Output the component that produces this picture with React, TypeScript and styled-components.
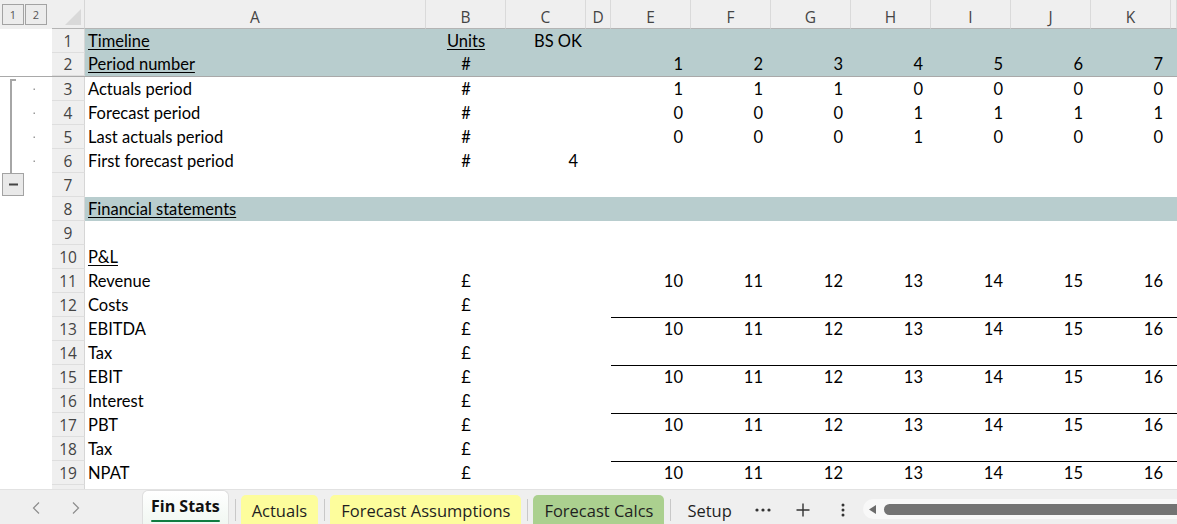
import React from "react";
import styled, { createGlobalStyle, css } from "styled-components";

const GlobalStyle = createGlobalStyle`
  html, body { margin: 0; padding: 0; background: #ffffff; }
  body { overflow: hidden; }
  * { box-sizing: border-box; }
`;

const CELL_FONT = `Lato, "Liberation Sans", sans-serif`;
const UI_FONT = `"Open Sans", "Noto Sans", sans-serif`;
const COLS = "341px 80px 80px 25px repeat(7, 80px) 1fr";
const BAND = "#b8cdce";

const Frame = styled.div`
  width: 1177px;
  height: 524px;
  display: flex;
  flex-direction: column;
  overflow: hidden;
  background: #ffffff;
`;

const Sheet = styled.div`
  height: 489px;
  flex: none;
  overflow: hidden;
  display: flex;
  flex-direction: column;
`;

const HeaderRow = styled.div`
  display: grid;
  grid-template-columns: 52px 33px ${COLS};
  height: 29px;
  flex: none;
  background: #efefef;
`;

const LevelBox = styled.div`
  display: flex;
  gap: 1px;
  padding: 4px 0 0 2px;
`;

const LevelButton = styled.div`
  width: 22px;
  height: 21px;
  border: 1px solid #a3a3a3;
  background: #ececec;
  color: #555555;
  font: 11px ${UI_FONT};
  display: flex;
  align-items: center;
  justify-content: center;
`;

const Corner = styled.div`
  border-bottom: 1px solid #b4b4b4;
  border-right: 1px solid #d6d6d6;
  display: flex;
  align-items: flex-end;
  justify-content: flex-end;
  padding: 0 3px 3px 0;
`;

const ColHeader = styled.div`
  border-bottom: 1px solid #b4b4b4;
  border-right: 1px solid #dadada;
  color: #444444;
  font: 15.5px ${UI_FONT};
  display: flex;
  align-items: center;
  justify-content: center;
  padding-top: 6px;
  overflow: hidden;
`;

const SheetRow = styled.div<{ $frozen?: boolean }>`
  display: grid;
  grid-template-columns: 52px 33px 1fr;
  height: 24px;
  flex: none;
  ${(p) =>
    p.$frozen &&
    css`
      border-bottom: 1px solid #a9a9a9;
    `}
`;

const Gutter = styled.div`
  background: #ffffff;
  display: flex;
`;

const RowNum = styled.div`
  background: #efefef;
  border-bottom: 1px solid #dedede;
  border-right: 1px solid #d6d6d6;
  color: #444444;
  font: 15.5px ${UI_FONT};
  display: flex;
  align-items: center;
  justify-content: center;
`;

const CellStrip = styled.div<{ $band?: boolean }>`
  display: grid;
  grid-template-columns: ${COLS};
  background: ${(p) => (p.$band ? BAND : "#ffffff")};
`;

const Cell = styled.div<{
  $align?: "left" | "center" | "right";
  $rule?: boolean;
  $pr?: number;
}>`
  font: 16.5px ${CELL_FONT};
  color: #000000;
  display: flex;
  align-items: center;
  white-space: nowrap;
  padding: 0 ${(p) => (p.$pr ?? 8)}px 1px 3px;
  justify-content: ${(p) =>
    p.$align === "right" ? "flex-end" : p.$align === "center" ? "center" : "flex-start"};
  border-top: ${(p) => (p.$rule ? "1px solid #000000" : "none")};
`;

const Heading = styled.span`
  text-decoration: underline;
  text-underline-offset: 2px;
`;

const TabBar = styled.div`
  height: 35px;
  flex: none;
  display: flex;
  align-items: flex-end;
  background: #efefef;
  border-top: 1px solid #e2e2e2;
  font: 16.5px ${UI_FONT};
  color: #1f1f1f;
`;

const NavArea = styled.div`
  width: 142px;
  flex: none;
  align-self: stretch;
  display: flex;
  align-items: center;
  padding: 2px 0 0 16px;
`;

const NavButton = styled.div`
  width: 40px;
  display: flex;
  justify-content: center;
  align-items: center;
`;

const ActiveTab = styled.div`
  height: 34px;
  padding: 0 8px 4px;
  display: flex;
  align-items: center;
  position: relative;
  border: 1px solid #dedede;
  border-bottom: none;
  border-radius: 6px 6px 0 0;
  background: linear-gradient(#ffffff, #f1f7f2);
  font-weight: 700;
  font-size: 16px;
  color: #111111;
  flex: none;
`;

const ActiveLine = styled.span`
  position: absolute;
  left: 8px;
  right: 8px;
  bottom: 2px;
  height: 2px;
  border-radius: 1px;
  background: #107c41;
`;

const Tab = styled.div<{ $color?: string }>`
  height: 29px;
  padding: 1px 11px 0;
  display: flex;
  align-items: center;
  border-radius: 5px 5px 0 0;
  background: ${(p) => p.$color ?? "transparent"};
  white-space: nowrap;
  flex: none;
`;

const TabSep = styled.div`
  width: 1px;
  height: 22px;
  margin: 0 5px 3px 6px;
  background: #c8c8c8;
  flex: none;
`;

const IconButton = styled.div`
  width: 40px;
  height: 35px;
  display: flex;
  align-items: center;
  justify-content: center;
  padding-top: 6px;
  flex: none;
`;

const ScrollTrack = styled.div`
  flex: 1;
  height: 20px;
  margin: 0 0 5px 0;
  align-self: flex-end;
  background: #f8f8f8;
  border-radius: 10px 0 0 10px;
  display: flex;
  align-items: center;
  padding-left: 5px;
  gap: 7px;
`;

const ScrollThumb = styled.div`
  flex: 1;
  height: 11px;
  border-radius: 6px 0 0 6px;
  background: #737373;
`;

type OutlineKind = "start" | "mid" | "end";

const OutlineMark = ({ kind }: { kind?: OutlineKind }) => {
  if (!kind) return null;
  if (kind === "end") {
    return (
      <svg width="52" height="24" viewBox="0 0 52 24">
        <rect x="2.5" y="0.5" width="21" height="22" fill="#e9e9e9" stroke="#a3a3a3" />
        <rect x="9" y="10.5" width="9" height="2" fill="#444444" />
      </svg>
    );
  }
  return (
    <svg width="52" height="24" viewBox="0 0 52 24">
      {kind === "start" ? (
        <>
          <rect x="10" y="2" width="2" height="22" fill="#a6a6a6" />
          <rect x="10" y="2" width="6" height="2" fill="#a6a6a6" />
        </>
      ) : (
        <rect x="10" y="0" width="2" height="24" fill="#a6a6a6" />
      )}
      <rect x="33.5" y="11.5" width="1.5" height="1.5" fill="#9a9a9a" />
    </svg>
  );
};

type RowDef = {
  n: number;
  a?: string;
  aU?: boolean;
  b?: string;
  bU?: boolean;
  c?: string;
  cPr?: number;
  vals?: (number | string)[];
  band?: boolean;
  rule?: boolean;
  frozen?: boolean;
  outline?: OutlineKind;
  hideNum?: boolean;
};

const seq = [10, 11, 12, 13, 14, 15, 16];

const rows: RowDef[] = [
  { n: 1, a: "Timeline", aU: true, b: "Units", bU: true, c: "BS OK", cPr: 4, band: true },
  { n: 2, a: "Period number", aU: true, b: "#", vals: [1, 2, 3, 4, 5, 6, 7], band: true, frozen: true },
  { n: 3, a: "Actuals period", b: "#", vals: [1, 1, 1, 0, 0, 0, 0], outline: "start" },
  { n: 4, a: "Forecast period", b: "#", vals: [0, 0, 0, 1, 1, 1, 1], outline: "mid" },
  { n: 5, a: "Last actuals period", b: "#", vals: [0, 0, 0, 1, 0, 0, 0], outline: "mid" },
  { n: 6, a: "First forecast period", b: "#", c: "4", outline: "mid" },
  { n: 7, outline: "end" },
  { n: 8, a: "Financial statements", aU: true, band: true },
  { n: 9 },
  { n: 10, a: "P&L", aU: true },
  { n: 11, a: "Revenue", b: "£", vals: seq },
  { n: 12, a: "Costs", b: "£" },
  { n: 13, a: "EBITDA", b: "£", vals: seq, rule: true },
  { n: 14, a: "Tax", b: "£" },
  { n: 15, a: "EBIT", b: "£", vals: seq, rule: true },
  { n: 16, a: "Interest", b: "£" },
  { n: 17, a: "PBT", b: "£", vals: seq, rule: true },
  { n: 18, a: "Tax", b: "£" },
  { n: 19, a: "NPAT", b: "£", vals: seq, rule: true },
  { n: 20, hideNum: true },
];

const letters = ["A", "B", "C", "D", "E", "F", "G", "H", "I", "J", "K", ""];

const Chevron = ({ dir }: { dir: "left" | "right" }) => (
  <svg width="10" height="14" viewBox="0 0 10 14">
    <path
      d={dir === "left" ? "M8 1.5 L2.5 7 L8 12.5" : "M2 1.5 L7.5 7 L2 12.5"}
      fill="none"
      stroke="#8c8c8c"
      strokeWidth="1.2"
    />
  </svg>
);

const Text = ({ value, u }: { value?: string; u?: boolean }) =>
  value ? u ? <Heading>{value}</Heading> : <>{value}</> : null;

export default function App() {
  return (
    <Frame>
      <GlobalStyle />
      <Sheet>
        <HeaderRow>
          <LevelBox>
            <LevelButton>1</LevelButton>
            <LevelButton>2</LevelButton>
          </LevelBox>
          <Corner>
            <svg width="16" height="16" viewBox="0 0 16 16">
              <polygon points="16,0 16,16 0,16" fill="#d9d9d9" />
            </svg>
          </Corner>
          {letters.map((l, i) => (
            <ColHeader key={i}>{l}</ColHeader>
          ))}
        </HeaderRow>
        {rows.map((r) => {
          const vals = r.vals ?? [];
          return (
            <SheetRow key={r.n} $frozen={r.frozen}>
              <Gutter>
                <OutlineMark kind={r.outline} />
              </Gutter>
              <RowNum>{r.hideNum ? "" : r.n}</RowNum>
              <CellStrip $band={r.band}>
                <Cell>
                  <Text value={r.a} u={r.aU} />
                </Cell>
                <Cell $align="center" $pr={3}>
                  <Text value={r.b} u={r.bU} />
                </Cell>
                <Cell $align="right" $pr={r.cPr}>
                  <Text value={r.c} />
                </Cell>
                <Cell />
                {Array.from({ length: 7 }).map((_, i) => (
                  <Cell key={i} $align="right" $rule={r.rule}>
                    {vals[i] ?? ""}
                  </Cell>
                ))}
                <Cell $rule={r.rule} />
              </CellStrip>
            </SheetRow>
          );
        })}
      </Sheet>
      <TabBar>
        <NavArea>
          <NavButton>
            <Chevron dir="left" />
          </NavButton>
          <NavButton>
            <Chevron dir="right" />
          </NavButton>
        </NavArea>
        <ActiveTab>
          Fin Stats
          <ActiveLine />
        </ActiveTab>
        <TabSep />
        <Tab $color="#fdfd9c">Actuals</Tab>
        <TabSep />
        <Tab $color="#fdfd9c">Forecast Assumptions</Tab>
        <TabSep />
        <Tab $color="#abd08f">Forecast Calcs</Tab>
        <TabSep />
        <Tab>Setup</Tab>
        <IconButton>
          <svg width="16" height="4" viewBox="0 0 16 4">
            <circle cx="2" cy="2" r="1.6" fill="#333333" />
            <circle cx="8" cy="2" r="1.6" fill="#333333" />
            <circle cx="14" cy="2" r="1.6" fill="#333333" />
          </svg>
        </IconButton>
        <IconButton>
          <svg width="16" height="16" viewBox="0 0 16 16">
            <path d="M8 1.5 V14.5 M1.5 8 H14.5" stroke="#333333" strokeWidth="1.4" fill="none" />
          </svg>
        </IconButton>
        <IconButton>
          <svg width="4" height="14" viewBox="0 0 4 14">
            <circle cx="2" cy="2" r="1.5" fill="#333333" />
            <circle cx="2" cy="7" r="1.5" fill="#333333" />
            <circle cx="2" cy="12" r="1.5" fill="#333333" />
          </svg>
        </IconButton>
        <ScrollTrack>
          <svg width="9" height="9" viewBox="0 0 9 9">
            <polygon points="8,0 8,9 1,4.5" fill="#6b6b6b" />
          </svg>
          <ScrollThumb />
        </ScrollTrack>
      </TabBar>
    </Frame>
  );
}
